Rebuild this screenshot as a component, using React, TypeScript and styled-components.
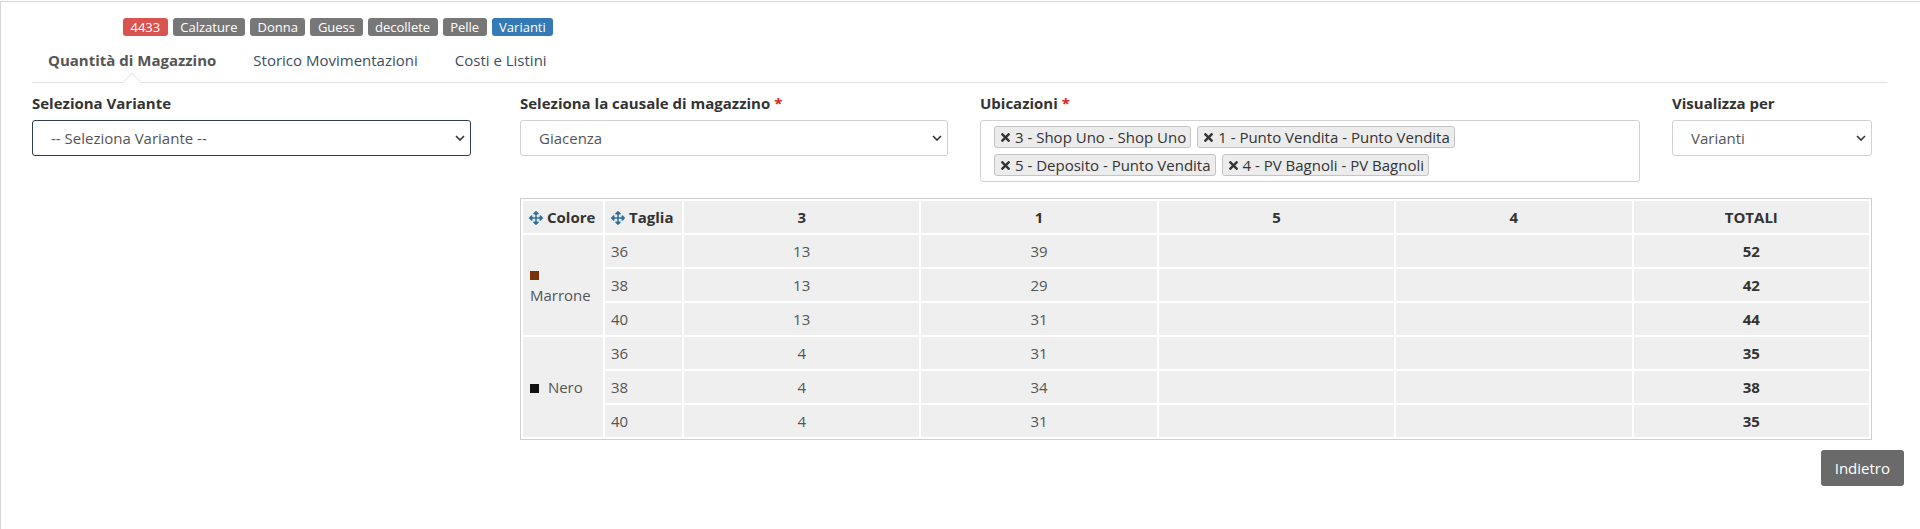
import styled, { createGlobalStyle } from 'styled-components';
import { FaArrowsAlt, FaTimes } from 'react-icons/fa';

const GlobalStyle = createGlobalStyle`
  html, body {
    margin: 0;
    padding: 0;
    background: #fff;
  }
  body {
    font-family: 'Open Sans', 'Liberation Sans', sans-serif;
    font-size: 15px;
    color: #333;
  }
  * {
    box-sizing: border-box;
  }
`;

const Page = styled.div`
  border-top: 1px solid #d6d6d6;
  border-left: 1px solid #d6d6d6;
  margin-top: 1px;
  min-height: 528px;
`;

const Container = styled.div`
  padding: 16px 33px 0 31px;
`;

const BadgeRow = styled.div`
  display: flex;
  gap: 5px;
  margin-left: 91px;
  height: 18px;
`;

const Badge = styled.span<{ tone?: 'danger' | 'primary' }>`
  display: inline-flex;
  align-items: center;
  height: 18px;
  padding: 0 7.5px;
  border-radius: 3px;
  font-size: 13px;
  line-height: 18px;
  color: #fff;
  background: ${p => (p.tone === 'danger' ? '#d9534f' : p.tone === 'primary' ? '#337ab7' : '#777')};
`;

const TabBar = styled.div`
  display: flex;
  gap: 5px;
  height: 46px;
  margin-top: 1px;
  border-bottom: 1px solid #e0e0e0;
`;

const Tab = styled.div<{ active?: boolean }>`
  position: relative;
  display: flex;
  align-items: center;
  padding: 0 16px;
  font-size: 15px;
  font-weight: ${p => (p.active ? 700 : 400)};
  color: ${p => (p.active ? '#555' : '#3d4d5e')};

  ${p =>
    p.active &&
    `
    &::before, &::after {
      content: '';
      position: absolute;
      left: 50%;
      width: 0;
      height: 0;
      border-style: solid;
      border-color: transparent;
    }
    &::before {
      bottom: -1px;
      margin-left: -10px;
      border-width: 0 10px 10px 10px;
      border-bottom-color: #dcdcdc;
    }
    &::after {
      bottom: -1px;
      margin-left: -9px;
      border-width: 0 9px 9px 9px;
      border-bottom-color: #fff;
    }
  `}
`;

const FormRow = styled.div`
  display: flex;
  gap: 49px;
  margin-top: 10px;
  padding-right: 15px;
`;

const LeftCol = styled.div`
  width: 439px;
  flex-shrink: 0;
`;

const RightCol = styled.div`
  flex: 1;
  display: flex;
  flex-direction: column;
`;

const FieldGrid = styled.div`
  display: grid;
  grid-template-columns: 428px 660px 1fr;
  column-gap: 32px;
`;

const Field = styled.div`
  display: flex;
  flex-direction: column;
`;

const Label = styled.div`
  font-weight: 700;
  font-size: 15px;
  line-height: 20px;
  color: #333;
  margin-bottom: 7px;
`;

const Required = styled.span`
  color: #e02020;
  margin-left: 4px;
`;

const SelectBox = styled.div<{ focused?: boolean }>`
  display: flex;
  align-items: center;
  justify-content: space-between;
  height: 36px;
  padding: 0 5px 0 18px;
  border: 1px solid ${p => (p.focused ? '#2c3e50' : '#d2d2d2')};
  border-radius: 3px;
  color: #555;
  font-size: 15px;
  background: #fff;
`;

const MultiBox = styled.div`
  display: flex;
  flex-wrap: wrap;
  gap: 6px;
  min-height: 62px;
  padding: 5px 13px;
  border: 1px solid #d2d2d2;
  border-radius: 3px;
  background: #fff;
`;

const Choice = styled.span`
  display: inline-flex;
  align-items: center;
  gap: 3px;
  height: 22px;
  padding: 0 4px;
  border: 1px solid #c4c4c4;
  border-radius: 3px;
  background: #ececec;
  color: #333;
  font-size: 15px;
`;

const Table = styled.table`
  width: 100%;
  margin-top: 16px;
  table-layout: fixed;
  border-collapse: separate;
  border-spacing: 2px;
  border: 1px solid #cfcfcf;
  background: #fff;
`;

const Th = styled.th<{ align?: 'left' | 'center' }>`
  height: 32px;
  padding: 0 6px;
  background: #efefef;
  font-weight: 700;
  color: #333;
  text-align: ${p => p.align || 'center'};
  white-space: nowrap;

  svg {
    color: #2f7196;
    vertical-align: -2px;
    margin-right: 4px;
  }
`;

const Td = styled.td<{ align?: 'left' | 'center'; strong?: boolean }>`
  height: 32px;
  padding: 0 6px;
  background: #efefef;
  color: ${p => (p.strong ? '#333' : '#555')};
  font-weight: ${p => (p.strong ? 700 : 400)};
  text-align: ${p => p.align || 'center'};
  line-height: 21px;
`;

const ColorCell = styled(Td)`
  padding: 0 7px;
  vertical-align: middle;
`;

const Swatch = styled.span<{ color: string }>`
  display: inline-block;
  width: 9px;
  height: 9px;
  margin-right: 5px;
  background: ${p => p.color};
  vertical-align: 0;
`;

const Footer = styled.div`
  display: flex;
  justify-content: flex-end;
  padding-right: 16px;
  margin-top: 10px;
`;

const Button = styled.button`
  height: 36px;
  padding: 0 14px;
  border: none;
  border-radius: 3px;
  background: #6a6a6a;
  color: #fff;
  font-family: 'Open Sans', 'Liberation Sans', sans-serif;
  font-size: 15px;
`;

const Chevron = () => (
  <svg width="10" height="6" viewBox="0 0 10 6" fill="none">
    <path d="M1 1l4 4 4-4" stroke="#333" strokeWidth="1.6" />
  </svg>
);

const locations = ['3 - Shop Uno - Shop Uno', '1 - Punto Vendita - Punto Vendita', '5 - Deposito - Punto Vendita', '4 - PV Bagnoli - PV Bagnoli'];

const stock = [
  { color: 'Marrone', hex: '#7a3208', sizes: [
    { size: '36', values: ['13', '39', '', ''], total: '52' },
    { size: '38', values: ['13', '29', '', ''], total: '42' },
    { size: '40', values: ['13', '31', '', ''], total: '44' },
  ] },
  { color: 'Nero', hex: '#111', sizes: [
    { size: '36', values: ['4', '31', '', ''], total: '35' },
    { size: '38', values: ['4', '34', '', ''], total: '38' },
    { size: '40', values: ['4', '31', '', ''], total: '35' },
  ] },
];

export default function App() {
  return (
    <>
      <GlobalStyle />
      <Page>
        <Container>
          <BadgeRow>
            <Badge tone="danger">4433</Badge>
            <Badge>Calzature</Badge>
            <Badge>Donna</Badge>
            <Badge>Guess</Badge>
            <Badge>decollete</Badge>
            <Badge>Pelle</Badge>
            <Badge tone="primary">Varianti</Badge>
          </BadgeRow>

          <TabBar>
            <Tab active>Quantità di Magazzino</Tab>
            <Tab>Storico Movimentazioni</Tab>
            <Tab>Costi e Listini</Tab>
          </TabBar>

          <FormRow>
            <LeftCol>
              <Label>Seleziona Variante</Label>
              <SelectBox focused>
                -- Seleziona Variante --
                <Chevron />
              </SelectBox>
            </LeftCol>

            <RightCol>
              <FieldGrid>
                <Field>
                  <Label>Seleziona la causale di magazzino<Required>*</Required></Label>
                  <SelectBox>
                    Giacenza
                    <Chevron />
                  </SelectBox>
                </Field>
                <Field>
                  <Label>Ubicazioni<Required>*</Required></Label>
                  <MultiBox>
                    {locations.map(l => (
                      <Choice key={l}>
                        <FaTimes size={13} />
                        {l}
                      </Choice>
                    ))}
                  </MultiBox>
                </Field>
                <Field>
                  <Label>Visualizza per</Label>
                  <SelectBox>
                    Varianti
                    <Chevron />
                  </SelectBox>
                </Field>
              </FieldGrid>

              <Table>
                <colgroup>
                  <col style={{ width: 80 }} />
                  <col style={{ width: 77 }} />
                  <col />
                  <col />
                  <col />
                  <col />
                  <col />
                </colgroup>
                <thead>
                  <tr>
                    <Th align="left"><FaArrowsAlt size={14} />Colore</Th>
                    <Th align="left"><FaArrowsAlt size={14} />Taglia</Th>
                    <Th>3</Th>
                    <Th>1</Th>
                    <Th>5</Th>
                    <Th>4</Th>
                    <Th>TOTALI</Th>
                  </tr>
                </thead>
                <tbody>
                  {stock.map(group =>
                    group.sizes.map((row, i) => (
                      <tr key={group.color + row.size}>
                        {i === 0 && (
                          <ColorCell align="left" rowSpan={group.sizes.length}>
                            <Swatch color={group.hex} /> {group.color}
                          </ColorCell>
                        )}
                        <Td align="left">{row.size}</Td>
                        {row.values.map((v, j) => (
                          <Td key={j}>{v}</Td>
                        ))}
                        <Td strong>{row.total}</Td>
                      </tr>
                    ))
                  )}
                </tbody>
              </Table>
            </RightCol>
          </FormRow>
        </Container>

        <Footer>
          <Button>Indietro</Button>
        </Footer>
      </Page>
    </>
  );
}
